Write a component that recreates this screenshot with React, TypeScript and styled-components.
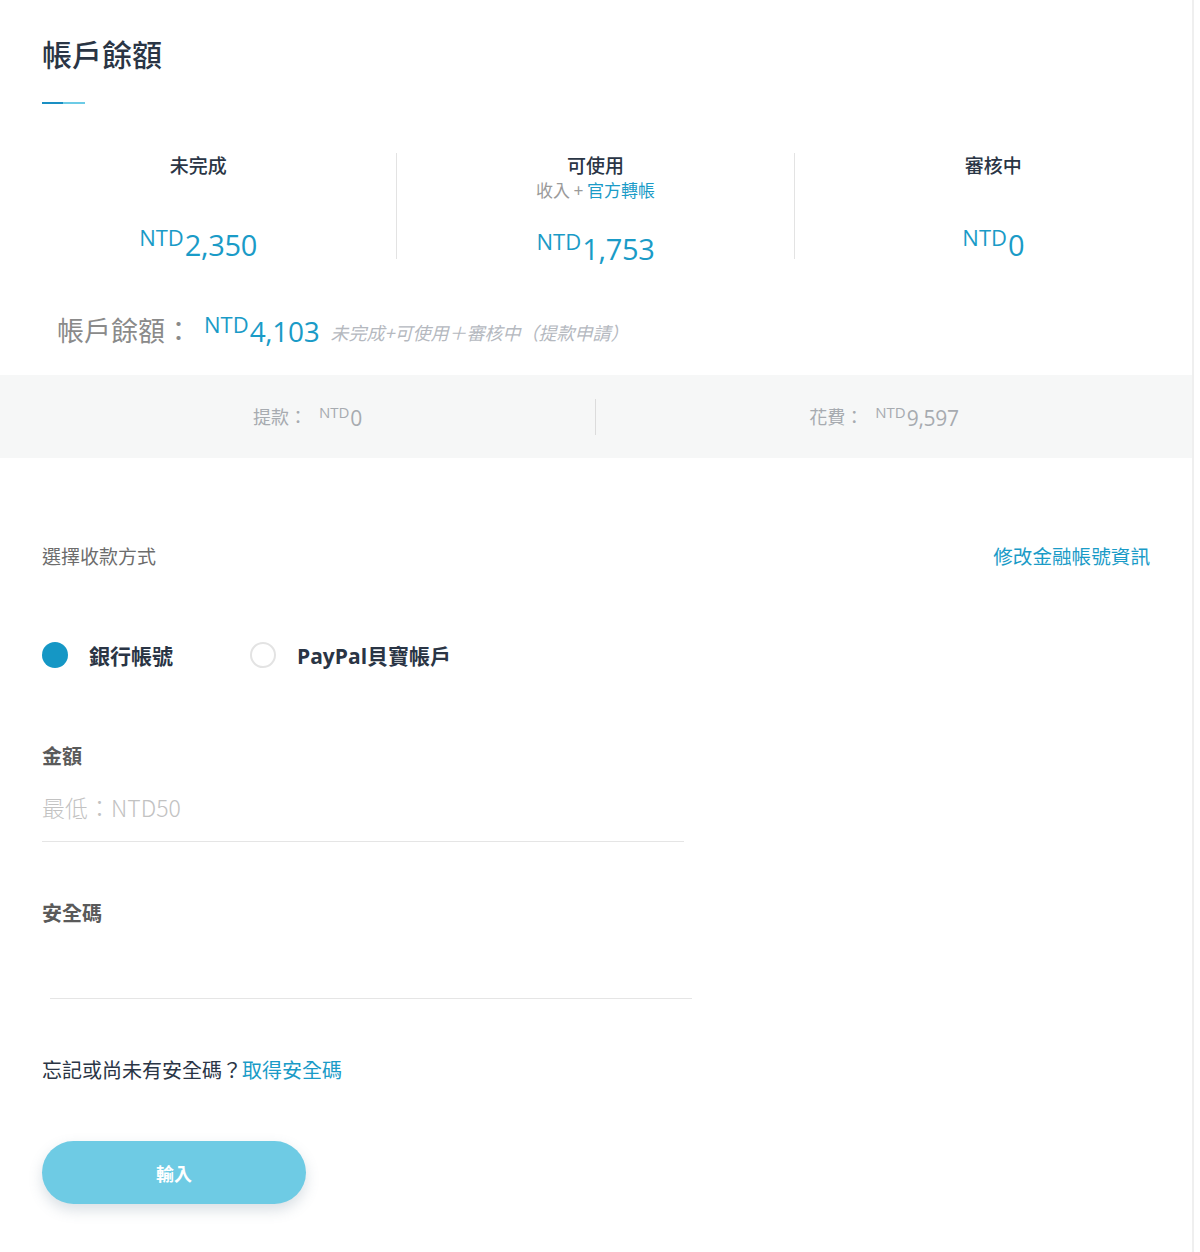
import styled, { createGlobalStyle } from "styled-components";

const GlobalStyle = createGlobalStyle`
  body {
    margin: 0;
    background: #fff;
    font-family: "Noto Sans CJK TC", "Noto Sans", sans-serif;
  }
`;

const Page = styled.div`
  width: 1194px;
  min-height: 1252px;
  border-right: 2px solid #efefef;
  box-sizing: border-box;
`;

const Header = styled.div`
  padding: 32px 42px 0;
`;

const Title = styled.h1`
  margin: 0;
  font-size: 30px;
  font-weight: 500;
  line-height: 42px;
  color: #2a3545;
`;

const TitleBar = styled.div`
  margin-top: 28px;
  width: 43px;
  height: 2px;
  background: linear-gradient(90deg, #1a8fc3 50%, #6ccbe6 50%);
`;

const Stats = styled.div`
  display: grid;
  grid-template-columns: repeat(3, 1fr);
  margin-top: 49px;
`;

const Stat = styled.div<{ last?: boolean }>`
  display: flex;
  flex-direction: column;
  align-items: center;
  height: 106px;
  border-right: ${({ last }) => (last ? "none" : "1px solid #e3e3e3")};
`;

const StatLabel = styled.div`
  font-size: 19px;
  font-weight: 500;
  line-height: 26px;
  margin-top: -1px;
  color: #2a3545;
`;

const StatSub = styled.div`
  font-size: 17px;
  line-height: 24px;
  color: #9a9a9a;
  height: 24px;
`;

const Blue = styled.span`
  color: #1a9bc7;
`;

const Money = styled.div<{ size: number; muted?: boolean }>`
  display: flex;
  align-items: flex-start;
  color: ${({ muted }) => (muted ? "#a7abb0" : "#1a9bc7")};
  font-family: "Open Sans", "Noto Sans", sans-serif;
  font-size: ${({ size }) => size}px;
  line-height: 1;
`;

const Unit = styled.span<{ size: number }>`
  font-size: ${({ size }) => size}px;
  margin-right: 1px;
  line-height: 1;
`;

const Amount = styled.span<{ drop: number }>`
  padding-top: ${({ drop }) => drop}px;
  letter-spacing: -0.3px;
`;

const StatAmount = styled.div`
  margin-top: 28px;
`;

const Total = styled.div`
  display: flex;
  align-items: center;
  padding: 0 57px;
  margin-top: 45px;
  height: 50px;
`;

const TotalLabel = styled.span`
  font-size: 27px;
  color: #8a8a8a;
  margin-right: 12px;
`;

const TotalNote = styled.span`
  font-size: 18px;
  font-style: italic;
  color: #b5b9bf;
  margin-left: 11px;
  margin-top: 6px;
`;

const Band = styled.div`
  display: grid;
  grid-template-columns: 1fr 1fr;
  align-items: center;
  height: 83px;
  margin-top: 21px;
  background: #f6f7f7;
`;

const BandItem = styled.div<{ side: "left" | "right" }>`
  display: flex;
  align-items: center;
  justify-content: center;
  height: 36px;
  padding: ${({ side }) => (side === "left" ? "0 0 0 20px" : "0 20px 0 0")};
  border-right: ${({ side }) => (side === "left" ? "1px solid #dcdcdc" : "none")};
  color: #a7abb0;
`;

const BandLabel = styled.span`
  font-size: 18px;
  margin-right: 12px;
  margin-top: -2px;
`;

const MethodRow = styled.div`
  display: flex;
  justify-content: space-between;
  align-items: center;
  padding: 0 42px;
  margin-top: 83px;
`;

const SectionLabel = styled.div`
  font-size: 19px;
  color: #6c6c6c;
`;

const EditLink = styled.a`
  font-size: 19.6px;
  color: #1a9bc7;
  text-decoration: none;
`;

const Radios = styled.div`
  display: flex;
  align-items: center;
  gap: 77px;
  padding: 0 42px;
  margin-top: 70px;
`;

const Radio = styled.label`
  display: flex;
  align-items: center;
  gap: 21px;
  font-size: 21px;
  font-weight: 700;
  color: #2a3545;
  font-family: "Open Sans", "Noto Sans CJK TC", sans-serif;
`;

const Dot = styled.span<{ checked?: boolean }>`
  width: 26px;
  height: 26px;
  border-radius: 50%;
  box-sizing: border-box;
  background: ${({ checked }) => (checked ? "#1597c5" : "#fff")};
  border: ${({ checked }) => (checked ? "none" : "2px solid #e3e3e3")};
`;

const Field = styled.div<{ gap: number }>`
  padding: 0 42px;
  margin-top: ${({ gap }) => gap}px;
`;

const FieldLabel = styled.div`
  font-size: 20px;
  font-weight: 700;
  color: #5a5a5a;
  line-height: 30px;
`;

const Input = styled.input<{ shift?: number }>`
  display: block;
  width: 642px;
  height: 68px;
  margin-top: 2px;
  margin-left: ${({ shift }) => shift || 0}px;
  padding: 0;
  border: none;
  border-bottom: 1px solid #e5e5e5;
  outline: none;
  font-family: "Noto Sans CJK TC", sans-serif;
  font-size: 23px;
  color: #333;
  background: transparent;
  &::placeholder {
    color: #c2c2c2;
    font-weight: 300;
  }
`;

const Hint = styled.div`
  padding: 0 42px;
  margin-top: 56px;
  font-size: 20px;
  color: #2a3545;
`;

const Submit = styled.button`
  display: block;
  margin: 57px 0 0 42px;
  width: 264px;
  height: 63px;
  border: none;
  border-radius: 32px;
  background: #6ecbe4;
  color: #fff;
  font-family: "Noto Sans CJK TC", sans-serif;
  font-size: 18px;
  font-weight: 700;
  box-shadow: 0 6px 14px rgba(80, 110, 130, 0.22);
`;

type MoneyProps = {
  value: string;
  size: number;
  unit: number;
  drop: number;
  muted?: boolean;
};

function Price({ value, size, unit, drop, muted }: MoneyProps) {
  return (
    <Money size={size} muted={muted}>
      <Unit size={unit}>NTD</Unit>
      <Amount drop={drop}>{value}</Amount>
    </Money>
  );
}

const stats = [
  { label: "未完成", value: "2,350" },
  { label: "可使用", value: "1,753", sub: true },
  { label: "審核中", value: "0" },
];

export default function App() {
  return (
    <Page>
      <GlobalStyle />
      <Header>
        <Title>帳戶餘額</Title>
        <TitleBar />
      </Header>

      <Stats>
        {stats.map((s, i) => (
          <Stat key={s.label} last={i === stats.length - 1}>
            <StatLabel>{s.label}</StatLabel>
            <StatSub>
              {s.sub && (
                <>
                  收入 + <Blue>官方轉帳</Blue>
                </>
              )}
            </StatSub>
            <StatAmount>
              <Price value={s.value} size={29} unit={22} drop={4} />
            </StatAmount>
          </Stat>
        ))}
      </Stats>

      <Total>
        <TotalLabel>帳戶餘額：</TotalLabel>
        <Price value="4,103" size={28} unit={22} drop={4} />
        <TotalNote>未完成+可使用＋審核中（提款申請）</TotalNote>
      </Total>

      <Band>
        <BandItem side="left">
          <BandLabel>提款：</BandLabel>
          <Price value="0" size={21} unit={15} drop={3} muted />
        </BandItem>
        <BandItem side="right">
          <BandLabel>花費：</BandLabel>
          <Price value="9,597" size={21} unit={15} drop={3} muted />
        </BandItem>
      </Band>

      <MethodRow>
        <SectionLabel>選擇收款方式</SectionLabel>
        <EditLink href="#">修改金融帳號資訊</EditLink>
      </MethodRow>

      <Radios>
        <Radio>
          <Dot checked />
          銀行帳號
        </Radio>
        <Radio>
          <Dot />
          PayPal貝寶帳戶
        </Radio>
      </Radios>

      <Field gap={71}>
        <FieldLabel>金額</FieldLabel>
        <Input placeholder="最低：NTD50" />
      </Field>

      <Field gap={56}>
        <FieldLabel>安全碼</FieldLabel>
        <Input type="password" shift={8} />
      </Field>

      <Hint>
        忘記或尚未有安全碼？<Blue>取得安全碼</Blue>
      </Hint>

      <Submit>輸入</Submit>
    </Page>
  );
}
